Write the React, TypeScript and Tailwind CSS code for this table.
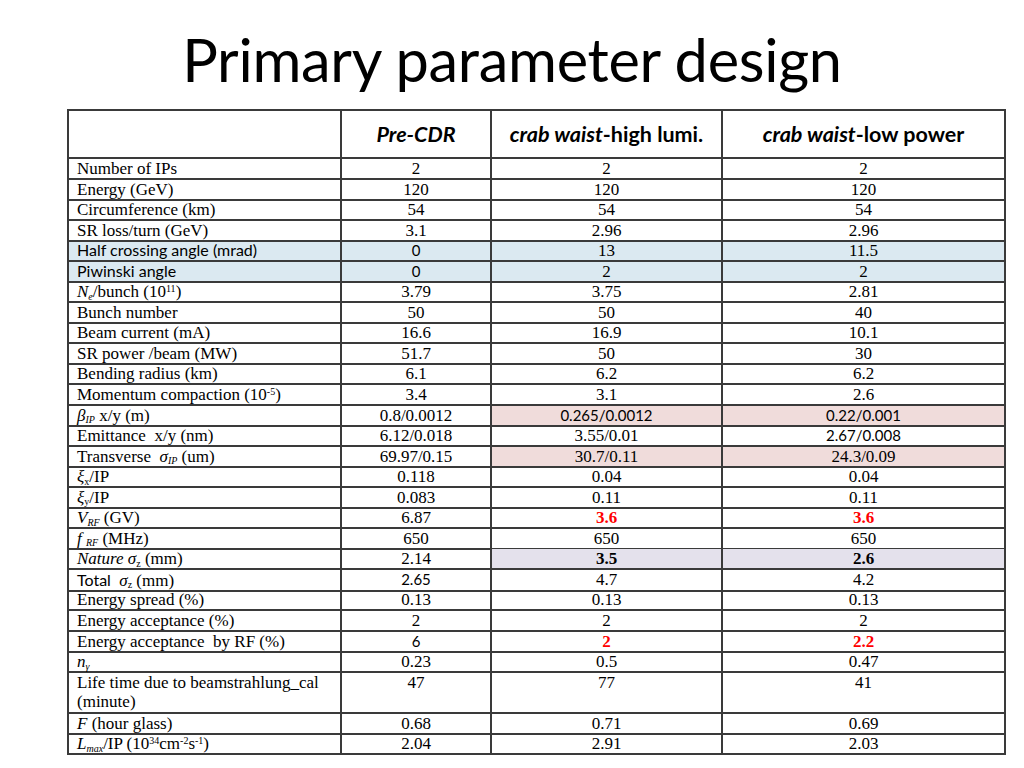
import React from "react";

type Cell = {
  v: React.ReactNode;
  calibri?: boolean;
  red?: boolean;
  bold?: boolean;
  bg?: string;
};

type Row = {
  label: React.ReactNode;
  calibriLabel?: boolean;
  bg?: string;
  tall?: boolean;
  cells: Cell[];
};

const c = (v: React.ReactNode, extra: Partial<Cell> = {}): Cell => ({ v, ...extra });

const pink = "bg-[#f0dcdb]";
const lav = "bg-[#e4e1ec]";

const rows: Row[] = [
  { label: "Number of IPs", cells: [c("2"), c("2"), c("2")] },
  { label: "Energy (GeV)", cells: [c("120"), c("120"), c("120")] },
  { label: "Circumference (km)", cells: [c("54"), c("54"), c("54")] },
  { label: "SR loss/turn (GeV)", cells: [c("3.1"), c("2.96"), c("2.96")] },
  {
    label: "Half crossing angle (mrad)",
    calibriLabel: true,
    bg: "bg-[#dbe9f1]",
    cells: [c("0", { calibri: true }), c("13"), c("11.5")],
  },
  {
    label: "Piwinski angle",
    calibriLabel: true,
    bg: "bg-[#dbe9f1]",
    cells: [c("0", { calibri: true }), c("2"), c("2")],
  },
  {
    label: (
      <>
        <i>N</i>
        <sub className="text-[10px] italic">e</sub>/bunch (10<sup className="text-[10px]">11</sup>)
      </>
    ),
    cells: [c("3.79"), c("3.75"), c("2.81")],
  },
  { label: "Bunch number", cells: [c("50"), c("50"), c("40")] },
  { label: "Beam current (mA)", cells: [c("16.6"), c("16.9"), c("10.1")] },
  { label: "SR power /beam (MW)", cells: [c("51.7"), c("50"), c("30")] },
  { label: "Bending radius (km)", cells: [c("6.1"), c("6.2"), c("6.2")] },
  {
    label: (
      <>
        Momentum compaction (10<sup className="text-[10px]">-5</sup>)
      </>
    ),
    cells: [c("3.4"), c("3.1"), c("2.6")],
  },
  {
    label: (
      <>
        <i>β</i>
        <sub className="text-[10px] italic">IP</sub> x/y (m)
      </>
    ),
    cells: [
      c("0.8/0.0012"),
      c("0.265/0.0012", { calibri: true, bg: pink }),
      c("0.22/0.001", { calibri: true, bg: pink }),
    ],
  },
  {
    label: "Emittance\u00a0 x/y (nm)",
    cells: [c("6.12/0.018"), c("3.55/0.01"), c("2.67/0.008", { calibri: true })],
  },
  {
    label: (
      <>
        Transverse&nbsp; <i>σ</i>
        <sub className="text-[10px] italic">IP</sub> (um)
      </>
    ),
    cells: [c("69.97/0.15"), c("30.7/0.11", { bg: pink }), c("24.3/0.09", { bg: pink })],
  },
  {
    label: (
      <>
        <i>ξ</i>
        <sub className="text-[10px]">x</sub>/IP
      </>
    ),
    cells: [c("0.118"), c("0.04"), c("0.04")],
  },
  {
    label: (
      <>
        <i>ξ</i>
        <sub className="text-[10px]">y</sub>/IP
      </>
    ),
    cells: [c("0.083"), c("0.11"), c("0.11")],
  },
  {
    label: (
      <>
        <i>V</i>
        <sub className="text-[10px] italic">RF</sub> (GV)
      </>
    ),
    cells: [c("6.87"), c("3.6", { red: true }), c("3.6", { red: true })],
  },
  {
    label: (
      <>
        <i>f</i> <sub className="text-[10px] italic">RF</sub> (MHz)
      </>
    ),
    cells: [c("650"), c("650"), c("650")],
  },
  {
    label: (
      <>
        <i>Nature σ</i>
        <sub className="text-[10px]">z</sub> (mm)
      </>
    ),
    cells: [c("2.14"), c("3.5", { bold: true, bg: lav }), c("2.6", { bold: true, bg: lav })],
  },
  {
    label: (
      <>
        <span className="font-['Lato',sans-serif] text-[16px]">Total&nbsp;</span> <i>σ</i>
        <sub className="text-[10px]">z</sub> (mm)
      </>
    ),
    cells: [c("2.65", { calibri: true }), c("4.7"), c("4.2")],
  },
  { label: "Energy spread (%)", cells: [c("0.13"), c("0.13"), c("0.13")] },
  { label: "Energy acceptance (%)", cells: [c("2"), c("2"), c("2")] },
  {
    label: "Energy acceptance\u00a0 by RF (%)",
    cells: [c("6", { calibri: true }), c("2", { red: true }), c("2.2", { red: true })],
  },
  {
    label: (
      <>
        <i>n</i>
        <sub className="text-[10px] italic">γ</sub>
      </>
    ),
    cells: [c("0.23"), c("0.5"), c("0.47")],
  },
  {
    label: (
      <>
        Life time due to beamstrahlung_cal
        <br />
        (minute)
      </>
    ),
    tall: true,
    cells: [c("47"), c("77"), c("41")],
  },
  {
    label: (
      <>
        <i>F</i> (hour glass)
      </>
    ),
    cells: [c("0.68"), c("0.71"), c("0.69")],
  },
  {
    label: (
      <>
        <i>L</i>
        <sub className="text-[10px] italic">max</sub>/IP (10<sup className="text-[10px]">34</sup>cm
        <sup className="text-[10px]">-2</sup>s<sup className="text-[10px]">-1</sup>)
      </>
    ),
    cells: [c("2.04"), c("2.91"), c("2.03")],
  },
];

const cols = "grid grid-cols-[273px_150px_231px_283px]";
const line = "border-r-2 border-b-2 border-[#3a3a3a]";

export default function App() {
  return (
    <div className="w-[1024px] h-[768px] bg-white overflow-hidden text-black">
      <h1 className="h-[109px] pt-[26px] text-center font-['Lato',sans-serif] text-[59.5px] leading-[66px] tracking-[-0.3px]">
        Primary parameter design
      </h1>

      <div className="ml-[67px] w-[939px] border-t-2 border-l-2 border-[#3a3a3a] font-['Liberation_Serif',serif] text-[17px]">
        <div className={`${cols} h-[48px] font-['Lato',sans-serif] font-bold text-[21.5px]`}>
          <div className={line} />
          <div className={`${line} flex items-center justify-center`}>
            <i>Pre-CDR</i>
          </div>
          <div className={`${line} flex items-center justify-center`}>
            <span>
              <i>crab waist</i>-high lumi.
            </span>
          </div>
          <div className={`${line} flex items-center justify-center`}>
            <span>
              <i>crab waist</i>-low power
            </span>
          </div>
        </div>

        {rows.map((r, i) => (
          <div key={i} className={`${cols} ${r.tall ? "h-[41px]" : "h-[20.55px]"} ${r.bg ?? ""}`}>
            <div
              className={`${line} pl-[8px] whitespace-nowrap ${
                r.calibriLabel ? "font-['Lato',sans-serif] text-[16px] leading-[18px]" : "leading-[19px]"
              }`}
            >
              {r.label}
            </div>
            {r.cells.map((cell, j) => (
              <div
                key={j}
                className={`${line} text-center leading-[19px] ${cell.bg ?? ""} ${
                  cell.calibri ? "font-['Lato',sans-serif] text-[15px]" : ""
                } ${cell.red ? "text-[#ff0000] font-bold" : ""} ${cell.bold ? "font-bold" : ""}`}
              >
                {cell.v}
              </div>
            ))}
          </div>
        ))}
      </div>
    </div>
  );
}
